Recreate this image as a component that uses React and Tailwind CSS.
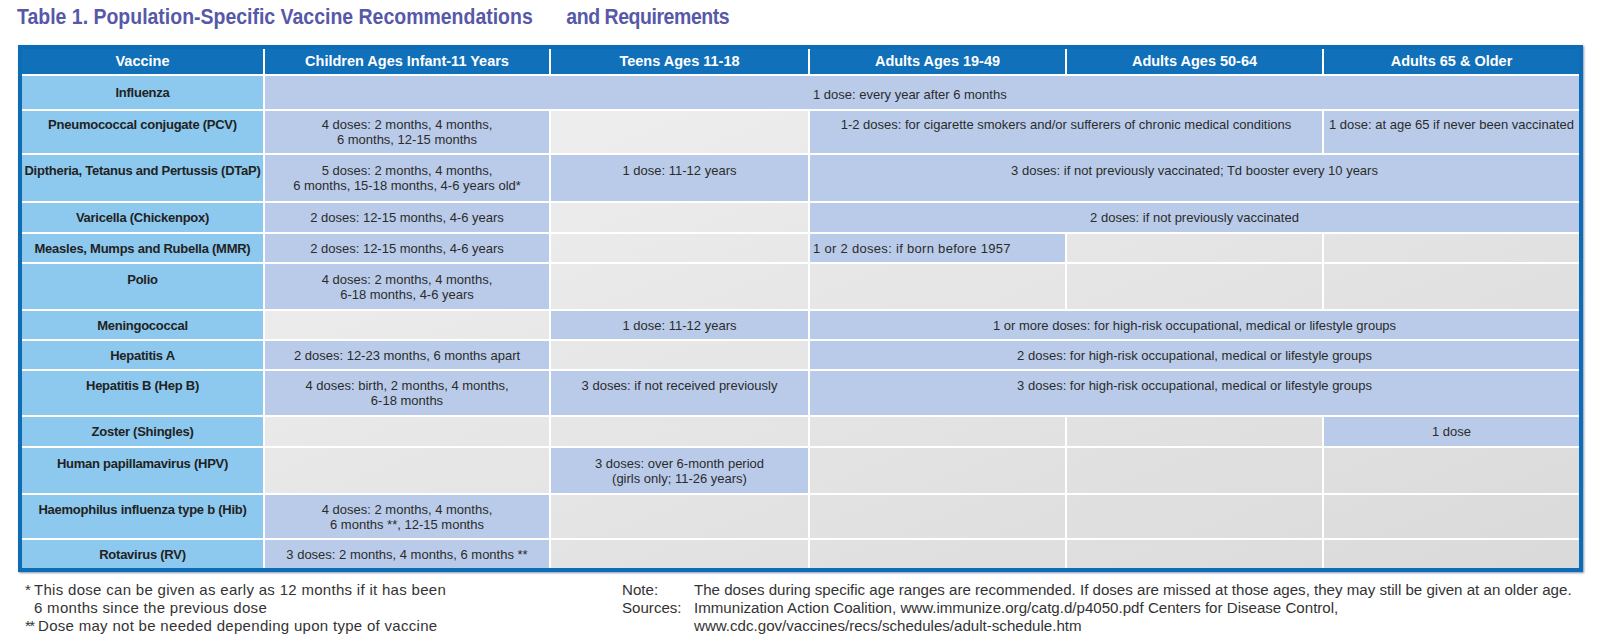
import React from 'react';

const sans = "[font-family:'Liberation_Sans',Arial,sans-serif]";

const kinds = {
  head: 'bg-[#1170ba] text-white font-bold text-[14.5px] flex items-center justify-center',
  name: 'bg-[#8dc9ef] text-[#222] font-bold text-[13px] tracking-[-0.25px] leading-[15px] flex flex-col items-center justify-center whitespace-nowrap',
  fill: 'bg-[#b9cbe9] text-[#2b2b2b] text-[13px] leading-[15px] flex flex-col items-center justify-center whitespace-nowrap',
  left: 'bg-[#b9cbe9] text-[#2b2b2b] text-[13px] leading-[15px] flex flex-col items-start justify-center whitespace-nowrap pl-[3px] tracking-[0.3px]',
  flu: 'bg-[#b9cbe9] text-[#2b2b2b] text-[13px] leading-[15px] flex flex-col items-start justify-center whitespace-nowrap pl-[548px] pt-[3px]',
  empty: 'bg-gradient-to-br from-[#f5f5f5] to-[#d8d8d8] bg-fixed',
};

const spans = { 1: '', 2: 'col-span-2', 3: 'col-span-3', 5: 'col-span-5' };

const Cell = ({ k = 'empty', span = 1, children }) => (
  <div className={`${kinds[k]} ${spans[span]}`}>{children}</div>
);

// each row: vaccine name, then cells [kind, span, text]
const rows = [
  ['Influenza', [['flu', 5, '1 dose: every year after 6 months']]],
  ['Pneumococcal conjugate (PCV)', [
    ['fill', 1, ['4 doses: 2 months, 4 months,', '6 months, 12-15 months']],
    ['empty', 1],
    ['fill', 2, '1-2 doses: for cigarette smokers and/or sufferers of chronic medical conditions'],
    ['fill', 1, '1 dose: at age 65 if never been vaccinated'],
  ]],
  ['Diptheria, Tetanus and Pertussis (DTaP)', [
    ['fill', 1, ['5 doses: 2 months, 4 months,', '6 months, 15-18 months, 4-6 years old*']],
    ['fill', 1, '1 dose: 11-12 years'],
    ['fill', 3, '3 doses: if not previously vaccinated; Td booster every 10 years'],
  ]],
  ['Varicella (Chickenpox)', [
    ['fill', 1, '2 doses: 12-15 months, 4-6 years'],
    ['empty', 1],
    ['fill', 3, '2 doses: if not previously vaccinated'],
  ]],
  ['Measles, Mumps and Rubella (MMR)', [
    ['fill', 1, '2 doses: 12-15 months, 4-6 years'],
    ['empty', 1],
    ['left', 1, '1 or 2 doses: if born before 1957'],
    ['empty', 1],
    ['empty', 1],
  ]],
  ['Polio', [
    ['fill', 1, ['4 doses: 2 months, 4 months,', '6-18 months, 4-6 years']],
    ['empty', 1], ['empty', 1], ['empty', 1], ['empty', 1],
  ]],
  ['Meningococcal', [
    ['empty', 1],
    ['fill', 1, '1 dose: 11-12 years'],
    ['fill', 3, '1 or more doses: for high-risk occupational, medical or lifestyle groups'],
  ]],
  ['Hepatitis A', [
    ['fill', 1, '2 doses: 12-23 months, 6 months apart'],
    ['empty', 1],
    ['fill', 3, '2 doses: for high-risk occupational, medical or lifestyle groups'],
  ]],
  ['Hepatitis B (Hep B)', [
    ['fill', 1, ['4 doses: birth, 2 months, 4 months,', '6-18 months']],
    ['fill', 1, '3 doses: if not received previously'],
    ['fill', 3, '3 doses: for high-risk occupational, medical or lifestyle groups'],
  ]],
  ['Zoster (Shingles)', [
    ['empty', 1], ['empty', 1], ['empty', 1], ['empty', 1],
    ['fill', 1, '1 dose'],
  ]],
  ['Human papillamavirus (HPV)', [
    ['empty', 1],
    ['fill', 1, ['3 doses: over 6-month period', '(girls only; 11-26 years)']],
    ['empty', 1], ['empty', 1], ['empty', 1],
  ]],
  ['Haemophilus influenza type b (Hib)', [
    ['fill', 1, ['4 doses: 2 months, 4 months,', '6 months **, 12-15 months']],
    ['empty', 1], ['empty', 1], ['empty', 1], ['empty', 1],
  ]],
  ['Rotavirus (RV)', [
    ['fill', 1, '3 doses: 2 months, 4 months, 6 months **'],
    ['empty', 1], ['empty', 1], ['empty', 1], ['empty', 1],
  ]],
];

const headers = [
  'Vaccine',
  'Children Ages Infant-11 Years',
  'Teens Ages 11-18',
  'Adults Ages 19-49',
  'Adults Ages 50-64',
  'Adults 65 & Older',
];

// in two-line rows a single line sits level with the first line
const Lines = ({ text, multi }) => {
  const list = Array.isArray(text) ? text : multi ? [text, ''] : [text];
  return list.map((t, i) => (
    <div key={i} className="h-[15px]">{t}</div>
  ));
};

export default function App() {
  return (
    <div className={`w-[1600px] h-[640px] bg-white overflow-hidden ${sans}`}>
      {/* Title */}
      <div className="h-[45px] pl-[17px] pt-[3px]">
        <h1 className="origin-left scale-x-[0.885] whitespace-nowrap text-[22px] leading-[28px] font-bold text-[#5658a8]">
          Table 1. Population-Specific Vaccine Recommendations
          <span className="ml-[38px] tracking-[-0.5px]">and Requirements</span>
        </h1>
      </div>

      {/* Table */}
      <div className="ml-[18px] w-[1565px] border-4 border-[#0e6bb6] bg-white shadow-[1px_1px_2px_rgba(0,40,100,0.5)]">
        <div className="grid grid-cols-[241px_284px_257px_255px_255px_255px] grid-rows-[25px_33px_42px_46px_29px_28px_45px_28px_28px_44px_29px_45px_43px_28px] gap-[2px] bg-white">
          {headers.map((h) => (
            <Cell key={h} k="head">{h}</Cell>
          ))}
          {rows.map(([name, cells]) => {
            const multi = cells.some(([, , t]) => Array.isArray(t));
            return (
              <React.Fragment key={name}>
                <Cell k="name">
                  <Lines text={name} multi={multi} />
                </Cell>
                {cells.map(([k, span, text], i) => (
                  <Cell key={i} k={k} span={span}>
                    {text ? <Lines text={text} multi={multi} /> : null}
                  </Cell>
                ))}
              </React.Fragment>
            );
          })}
        </div>
      </div>

      {/* Footnotes */}
      <div className="flex mt-[9px] text-[#333] leading-[18px]">
        <div className="ml-[25px] w-[560px] shrink-0 text-[15px] tracking-[0.3px]">
          <div className="grid grid-cols-[9px_1fr]">
            <span>*</span>
            <span className="whitespace-nowrap">This dose can be given as early as 12 months if it has been<br />6 months since the previous dose</span>
            <span className="tracking-[-1.5px] whitespace-nowrap">**</span>
            <span className="whitespace-nowrap pl-[4px]">Dose may not be needed depending upon type of vaccine</span>
          </div>
        </div>
        <div className="ml-[37px] shrink-0 grid grid-cols-[72px_1fr] text-[15.1px] whitespace-nowrap">
          <span>Note:</span>
          <span>The doses during specific age ranges are recommended. If doses are missed at those ages, they may still be given at an older age.</span>
          <span>Sources:</span>
          <span>Immunization Action Coalition, www.immunize.org/catg.d/p4050.pdf Centers for Disease Control,<br />www.cdc.gov/vaccines/recs/schedules/adult-schedule.htm</span>
        </div>
      </div>
    </div>
  );
}
